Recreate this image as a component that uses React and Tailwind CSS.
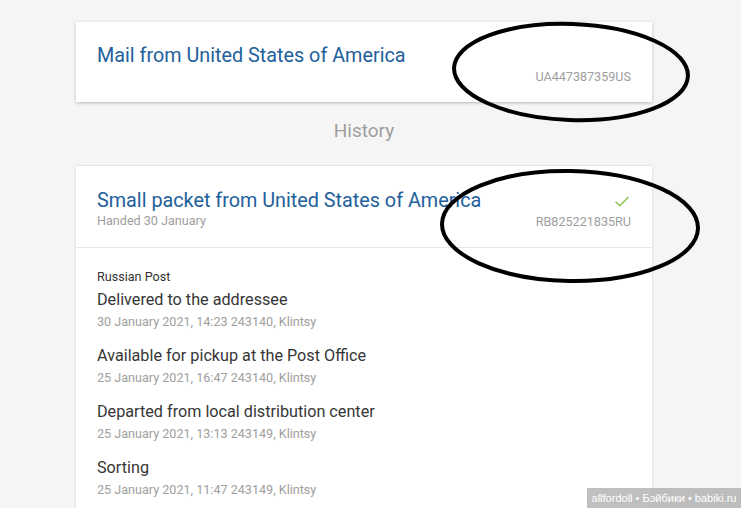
import { Check } from 'lucide-react';

const events = [
  { title: 'Delivered to the addressee', meta: '30 January 2021, 14:23 243140, Klintsy' },
  { title: 'Available for pickup at the Post Office', meta: '25 January 2021, 16:47 243140, Klintsy' },
  { title: 'Departed from local distribution center', meta: '25 January 2021, 13:13 243149, Klintsy' },
  { title: 'Sorting', meta: '25 January 2021, 11:47 243149, Klintsy' },
];

const App = () => {
  return (
    <div className="relative h-[508px] w-[741px] overflow-hidden bg-[#f5f5f5] font-['Roboto',sans-serif]">
      <div className="pl-[76px] pt-[22px]">
        {/* Tracked mail card */}
        <div className="w-[576px] bg-white px-[21px] pt-[22px] pb-[17px] shadow-[0_1px_3px_rgba(0,0,0,0.25)]">
          <h2 className="text-[19.8px] leading-6 text-[#22609c]">Mail from United States of America</h2>
          <p className="mt-[1px] text-right text-[12.6px] leading-4 text-[#9e9e9e]">UA447387359US</p>
        </div>

        <h3 className="w-[576px] mt-[17px] mb-[23px] text-center text-[19px] leading-6 text-[#9e9e9e]">History</h3>

        {/* History card */}
        <div className="w-[576px] bg-white shadow-[0_0_2px_rgba(0,0,0,0.18)]">
          <div className="flex items-start justify-between border-b border-[#e6e6e6] px-[21px] pt-[23px] pb-[17px]">
            <div>
              <h2 className="text-[19.8px] leading-6 text-[#22609c]">Small packet from United States of America</h2>
              <p className="text-[12.6px] leading-4 text-[#9e9e9e]">Handed 30 January</p>
            </div>
            <div className="flex flex-col items-end pt-[4px]">
              <Check size={18} strokeWidth={2} className="text-[#8bc34a]" />
              <p className="mt-[3px] text-[12.6px] leading-4 text-[#9e9e9e]">RB825221835RU</p>
            </div>
          </div>

          <div className="px-[21px] pt-[21px] pb-6">
            <p className="mb-[5px] text-[12.6px] leading-4 text-[#333]">Russian Post</p>
            <div className="flex flex-col gap-4">
              {events.map((e) => (
                <div key={e.meta}>
                  <p className="text-[16.2px] leading-5 text-[#363636]">{e.title}</p>
                  <p className="mt-[4px] text-[12.6px] leading-4 text-[#9e9e9e]">{e.meta}</p>
                </div>
              ))}
            </div>
          </div>
        </div>
      </div>

      {/* hand-drawn marks over the screenshot */}
      <svg className="pointer-events-none absolute inset-0" width="741" height="508" viewBox="0 0 741 508">
        <ellipse cx="571" cy="72" rx="117" ry="48" fill="none" stroke="#000" strokeWidth="4" transform="rotate(2 571 72)" />
        <ellipse cx="570" cy="226" rx="128" ry="55" fill="none" stroke="#000" strokeWidth="4" transform="rotate(1 570 226)" />
      </svg>

      {/* watermark */}
      <div className="absolute bottom-0 right-0 flex h-[20px] w-[154px] items-center justify-center bg-[rgba(170,170,170,0.75)] font-['Liberation_Sans',sans-serif] text-[11px] text-white">
        allfordoll • Бэйбики • babiki.ru
      </div>
    </div>
  );
};

export default App;
